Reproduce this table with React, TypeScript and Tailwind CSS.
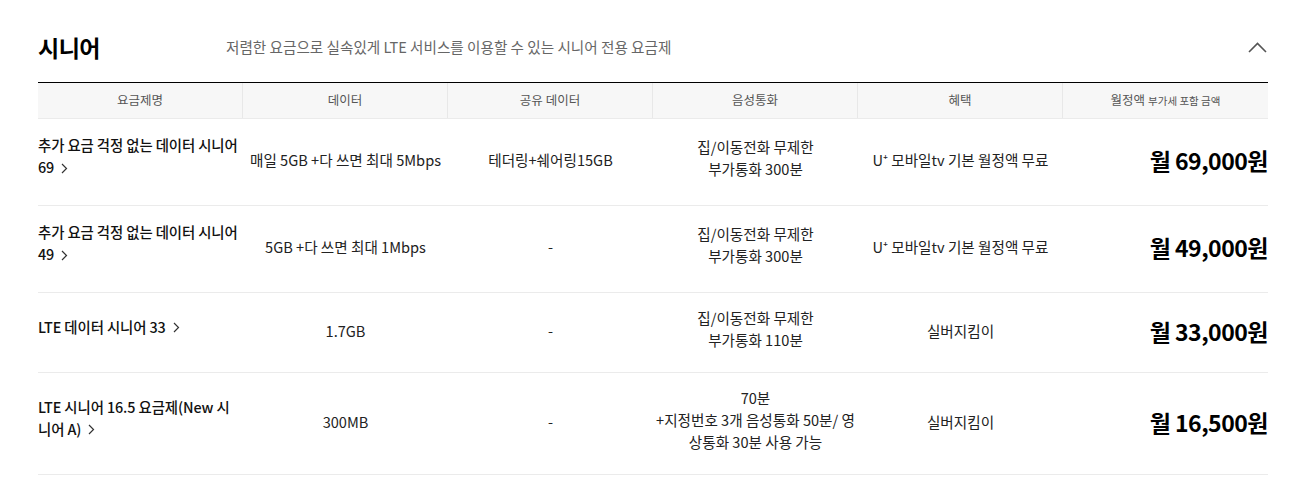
import React from 'react';

const plans = [
  {
    name: '추가 요금 걱정 없는 데이터 시니어 69',
    data: '매일 5GB +다 쓰면 최대 5Mbps',
    share: '테더링+쉐어링15GB',
    voice: ['집/이동전화 무제한', '부가통화 300분'],
    benefit: 'U⁺ 모바일tv 기본 월정액 무료',
    price: '월 69,000원',
    h: 'h-[87px]',
    nameCls: '',
  },
  {
    name: '추가 요금 걱정 없는 데이터 시니어 49',
    data: '5GB +다 쓰면 최대 1Mbps',
    share: '-',
    voice: ['집/이동전화 무제한', '부가통화 300분'],
    benefit: 'U⁺ 모바일tv 기본 월정액 무료',
    price: '월 49,000원',
    h: 'h-[87px]',
    nameCls: '',
  },
  {
    name: 'LTE 데이터 시니어 33',
    data: '1.7GB',
    share: '-',
    voice: ['집/이동전화 무제한', '부가통화 110분'],
    benefit: '실버지킴이',
    price: '월 33,000원',
    h: 'h-[80px]',
    nameCls: '',
  },
  {
    name: 'LTE 시니어 16.5 요금제(New 시니어 A)',
    data: '300MB',
    share: '-',
    voice: ['70분', '+지정번호 3개 음성통화 50분/ 영상통화 30분 사용 가능'],
    benefit: '실버지킴이',
    price: '월 16,500원',
    h: 'h-[102px]',
    nameCls: 'pr-[12px]',
  },
];

const headers = ['요금제명', '데이터', '공유 데이터', '음성통화', '혜택'];

export default function App() {
  return (
    <div
      className="w-[1307px] h-[486px] bg-white text-[#222] overflow-hidden"
      style={{ fontFamily: '"Noto Sans CJK KR", "Noto Sans", sans-serif' }}
    >
      <div className="mx-[38px] w-[1230px]">
        {/* title */}
        <div className="flex items-center h-[82px] pt-[12px]">
          <h2 className="text-[23px] font-bold text-black w-[188px] tracking-[-0.5px]">시니어</h2>
          <p className="text-[14.6px] text-[#666]">저렴한 요금으로 실속있게 LTE 서비스를 이용할 수 있는 시니어 전용 요금제</p>
          <svg className="ml-auto mr-[1px]" width="19" height="11" viewBox="0 0 19 11" fill="none">
            <path d="M1 10L9.5 1.5L18 10" stroke="#555" strokeWidth="1.6" />
          </svg>
        </div>

        {/* header */}
        <div className="grid grid-cols-6 h-[37px] bg-[#f7f7f7] border-t border-black border-b border-b-[#ebebeb] text-[12.5px] text-[#555]">
          {headers.map((t) => (
            <div key={t} className="flex items-center justify-center border-r border-[#e8e8e8]">{t}</div>
          ))}
          <div className="flex items-center justify-center">
            월정액<span className="ml-[3px] text-[10.5px]">부가세 포함 금액</span>
          </div>
        </div>

        {/* rows */}
        {plans.map((p) => (
          <div key={p.name} className={`grid grid-cols-6 items-center pb-[4px] border-b border-[#ebebeb] text-[14.6px] leading-[22px] text-[#222] ${p.h}`}>
            <div className={`font-medium text-[#111] text-[14.4px] tracking-[-0.1px] -mt-[8px] ${p.nameCls}`}>
              {p.name}
              <svg className="inline-block ml-[7px] -mt-[2px]" width="7" height="11" viewBox="0 0 7 11" fill="none">
                <path d="M1 1L5.5 5.5L1 10" stroke="#333" strokeWidth="1.2" />
              </svg>
            </div>
            <div className="text-center">{p.data}</div>
            <div className="text-center">{p.share}</div>
            <div className="text-center px-[2px] -mt-[4px]">
              {p.voice.map((v) => (
                <div key={v}>{v}</div>
              ))}
            </div>
            <div className="text-center">{p.benefit}</div>
            <div className="text-right text-[23px] font-bold text-black tracking-[-0.5px]">{p.price}</div>
          </div>
        ))}
      </div>
    </div>
  );
}
